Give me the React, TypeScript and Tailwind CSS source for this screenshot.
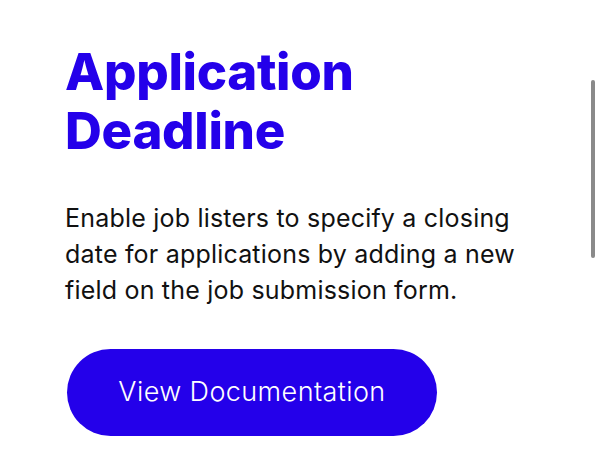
export default function App() {
  return (
    <div className="relative w-[600px] h-[458px] overflow-hidden bg-white">
      <div className="pl-[65px] pt-[42px]">
        <h1
          className="text-[51px] leading-[59px] font-extrabold text-[#2400ea] tracking-[-0.3px]"
          style={{ fontFamily: 'Inter, "Noto Sans", sans-serif' }}
        >
          Application
          <br />
          Deadline
        </h1>
        <p
          className="mt-[40px] w-[470px] text-[25px] leading-[36px] text-[#111] tracking-[0.2px]"
          style={{ fontFamily: 'Inter, "Noto Sans", sans-serif' }}
        >
          Enable job listers to specify a closing date for applications by adding a new field on the
          job submission form.
        </p>
        <button
          className="mt-[41px] ml-[2px] flex items-center justify-center w-[370px] h-[87px] rounded-full bg-[#2400ea] text-white text-[27px] font-light tracking-[0.4px]"
          style={{ fontFamily: 'Inter, "Noto Sans", sans-serif' }}
        >
          View Documentation
        </button>
      </div>
      <div className="absolute right-[5px] top-[80px] w-[4px] h-[178px] rounded-full bg-[#8a8a8a]" />
    </div>
  );
}
